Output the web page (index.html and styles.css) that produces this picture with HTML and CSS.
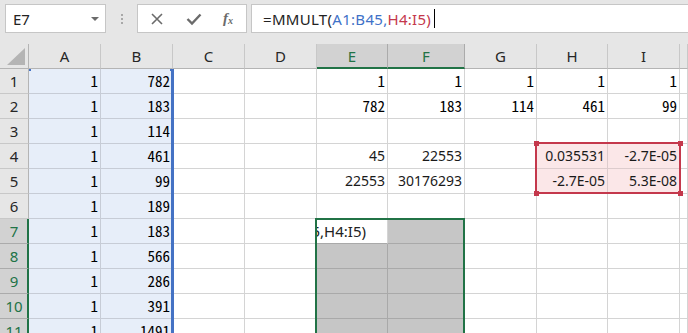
FILE: index.html
```html
<!DOCTYPE html>
<html lang="ja">
<head>
  <meta charset="UTF-8">
  <title>MMULT</title>
  <link rel="stylesheet" href="styles.css">
</head>
<body>

  <div class="toolbar">
    <div class="namebox">
      <span>E7</span>
      <span class="caret"></span>
    </div>
    <div class="grip"><i></i><i></i><i></i></div>
    <div class="fbuttons">
      <svg class="btn" width="14" height="14" viewBox="0 0 14 14">
        <path d="M2 2 L12 12 M12 2 L2 12" stroke="#6b6b6b" stroke-width="1.6" fill="none"/>
      </svg>
      <svg class="btn" width="16" height="14" viewBox="0 0 16 14">
        <path d="M1.5 7 L6 11.5 L14.5 2.5" stroke="#6b6b6b" stroke-width="2.4" fill="none"/>
      </svg>
      <span class="fx"><i>f</i><sub>x</sub></span>
    </div>
    <div class="formula">
      <span>=MMULT(</span><span class="ref-blue">A1:B45,</span><span class="ref-red">H4:I5)</span><span class="cursor"></span>
    </div>
  </div>

  <div class="sheet" id="sheet">
    <!-- range finder / selection frames -->
    <div class="blue-edge"></div>
    <div class="blue-dot left"></div>
    <div class="blue-dot right"></div>
    <div class="red-box"></div>
    <div class="red-dot" style="left:534px;top:97px"></div>
    <div class="red-dot" style="left:678px;top:97px"></div>
    <div class="red-dot" style="left:534px;top:147px"></div>
    <div class="red-dot" style="left:678px;top:147px"></div>
    <div class="green-box"></div>
  </div>

  <script>
    const cols = ['A', 'B', 'C', 'D', 'E', 'F', 'G', 'H', 'I', ''];
    const data = {
      1: { A: '1', B: '782', E: '1', F: '1', G: '1', H: '1', I: '1' },
      2: { A: '1', B: '183', E: '782', F: '183', G: '114', H: '461', I: '99' },
      3: { A: '1', B: '114' },
      4: { A: '1', B: '461', E: '45', F: '22553', H: '0.035531', I: '-2.7E-05' },
      5: { A: '1', B: '99', E: '22553', F: '30176293', H: '-2.7E-05', I: '5.3E-08' },
      6: { A: '1', B: '189' },
      7: { A: '1', B: '183' },
      8: { A: '1', B: '566' },
      9: { A: '1', B: '286' },
      10: { A: '1', B: '391' },
      11: { A: '1', B: '1491' }
    };
    // cells typed in a different font
    const propCells = ['E4', 'F4', 'E5', 'F5', 'H4', 'I4', 'H5', 'I5'];

    const sheet = document.getElementById('sheet');
    const frames = Array.from(sheet.children);

    function add(cls, text) {
      const el = document.createElement('div');
      el.className = cls;
      if (text) el.textContent = text;
      sheet.appendChild(el);
      return el;
    }

    // header row
    const corner = add('corner');
    corner.innerHTML = '<svg width="18" height="17"><polygon points="18,0 18,17 0,17" fill="#b4b4b4"/></svg>';
    cols.forEach(c => {
      add('colhdr' + (c === 'E' || c === 'F' ? ' on' : ''), c);
    });

    for (let r = 1; r <= 11; r++) {
      add('rowhdr' + (r >= 7 ? ' on' : ''), String(r));
      cols.forEach(c => {
        const id = c + r;
        let cls = 'cell';
        if (c === 'A' || c === 'B') cls += ' blue';
        if ((c === 'H' || c === 'I') && (r === 4 || r === 5)) cls += ' pink';
        if ((c === 'E' || c === 'F') && r >= 7 && id !== 'E7') cls += ' sel';
        cls += propCells.includes(id) ? ' prop' : ' mono';
        const el = add(cls, data[r][c] || '');
        if (id === 'E7') {
          el.className = 'cell active';
          el.innerHTML = '<span>=MMULT(A1:B45,H4:I5)</span>';
        }
      });
    }

    // keep frames drawn on top
    frames.forEach(f => sheet.appendChild(f));
  </script>
</body>
</html>
```

FILE: styles.css
```css
body, html {
  margin: 0;
  height: 100%;
  overflow: hidden;
  background-color: #ffffff;
  font-family: "Noto Sans", "Noto Sans CJK JP", sans-serif;
}

.toolbar {
  height: 44px;
  box-sizing: border-box;
  display: flex;
  align-items: flex-start;
  padding: 4px 0 0 5px;
  background-color: #e6e6e6;
}

.namebox {
  width: 101px;
  height: 29px;
  box-sizing: border-box;
  border: 1px solid #c6c6c6;
  background-color: #ffffff;
  display: flex;
  align-items: center;
  justify-content: space-between;
  padding: 0 6px 0 7px;
  font-size: 15px;
  color: #222222;
}

.caret {
  width: 0;
  height: 0;
  border-left: 4px solid transparent;
  border-right: 4px solid transparent;
  border-top: 4px solid #6b6b6b;
  margin-top: 1px;
}

.grip {
  width: 31px;
  height: 29px;
  display: flex;
  flex-direction: column;
  align-items: center;
  justify-content: center;
  gap: 2px;
}

.grip i {
  width: 2px;
  height: 2px;
  background-color: #a8a8a8;
}

.fbuttons {
  width: 110px;
  height: 29px;
  box-sizing: border-box;
  border: 1px solid #c6c6c6;
  background-color: #ffffff;
  display: flex;
  align-items: center;
  padding: 0 0 0 12px;
  gap: 22px;
}

.fx {
  font-family: "Liberation Serif", serif;
  font-size: 15px;
  color: #6b6b6b;
  font-weight: bold;
  margin-left: -1px;
}

.fx sub {
  font-size: 10px;
  font-style: italic;
  vertical-align: -1px;
}

.formula {
  flex: 1;
  height: 29px;
  box-sizing: border-box;
  margin: 0 -10px 0 4px;
  border: 1px solid #c6c6c6;
  background-color: #ffffff;
  display: flex;
  align-items: center;
  padding-left: 11px;
  font-size: 15px;
  letter-spacing: 0.3px;
  color: #222222;
  white-space: nowrap;
}

.ref-blue {
  color: #3f72c8;
}

.ref-red {
  color: #c4384c;
}

.cursor {
  width: 1px;
  height: 19px;
  background-color: #000000;
  margin-left: 3px;
}

/* grid */

.sheet {
  position: relative;
  display: grid;
  grid-template-columns: 29px 72px 72px 72px 72px 71px 77px 72px 71px 72px 1fr;
  grid-auto-rows: 25px;
  background-color: #ffffff;
}

.corner {
  background-color: #e6e6e6;
  border-right: 1px solid #b4b4b4;
  border-bottom: 1px solid #b4b4b4;
  box-sizing: border-box;
  display: flex;
  align-items: flex-end;
  justify-content: flex-end;
  padding: 0 3px 3px 0;
}

.colhdr {
  background-color: #e6e6e6;
  border-right: 1px solid #c8c8c8;
  border-bottom: 1px solid #b4b4b4;
  box-sizing: border-box;
  text-align: center;
  font-size: 15px;
  line-height: 24px;
  color: #262626;
}

.colhdr.on {
  background-color: #d2d2d2;
  border-right-color: #ababab;
  border-bottom: 2px solid #217346;
  color: #217346;
}

.rowhdr {
  background-color: #e6e6e6;
  border-right: 1px solid #b4b4b4;
  border-bottom: 1px solid #c8c8c8;
  box-sizing: border-box;
  text-align: center;
  font-size: 15px;
  line-height: 24px;
  color: #262626;
}

.rowhdr.on {
  background-color: #d2d2d2;
  border-right: 2px solid #217346;
  border-bottom-color: #ababab;
  color: #217346;
  padding-left: 1px;
}

.cell {
  border-right: 1px solid #d4d4d4;
  border-bottom: 1px solid #d4d4d4;
  box-sizing: border-box;
  text-align: right;
  padding: 0 2px;
  line-height: 24px;
  white-space: nowrap;
  overflow: hidden;
  color: #000000;
}

.mono {
  font-family: "Noto Sans Mono CJK JP", "DejaVu Sans Mono", monospace;
  font-size: 15px;
}

.prop {
  font-family: "Noto Sans", sans-serif;
  font-size: 14px;
  color: #1a1a1a;
}

.cell.blue {
  background-color: #e7eef9;
  border-color: #c7ccd6;
}

.cell.pink {
  background-color: #fbe7e8;
  border-color: #ddcccd;
}

.cell.sel {
  background-color: #c6c6c6;
  border-color: #a9a9a9;
}

.cell.active {
  display: flex;
  justify-content: flex-end;
  padding-right: 21px;
  font-size: 15px;
  color: #222222;
  border-bottom-color: #a9a9a9;
}

/* frames */

.blue-edge {
  position: absolute;
  left: 171px;
  top: 25px;
  width: 3px;
  height: 280px;
  background-color: #4472c4;
}

.blue-dot {
  position: absolute;
  top: 25px;
  height: 2px;
  background-color: #4472c4;
}

.blue-dot.left {
  left: 29px;
  width: 2px;
}

.blue-dot.right {
  left: 170px;
  width: 4px;
}

.red-box {
  position: absolute;
  left: 535px;
  top: 98px;
  width: 146px;
  height: 52px;
  box-sizing: border-box;
  border: 2px solid #c4384c;
}

.red-dot {
  position: absolute;
  width: 5px;
  height: 5px;
  background-color: #c4384c;
}

.green-box {
  position: absolute;
  left: 315px;
  top: 174px;
  width: 150px;
  height: 200px;
  box-sizing: border-box;
  border: 2px solid #217346;
}
```
